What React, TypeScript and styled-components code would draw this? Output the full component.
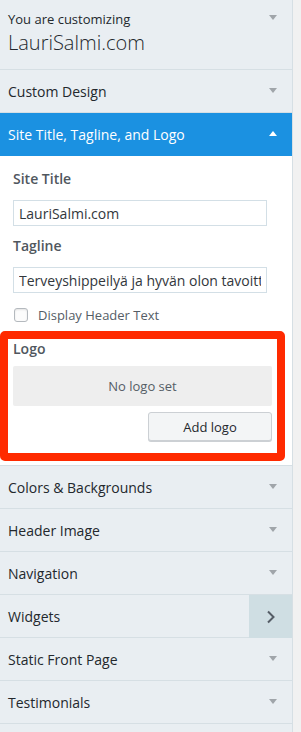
import React from 'react'
import styled, { createGlobalStyle } from 'styled-components'

const GlobalStyle = createGlobalStyle`
  html, body {
    margin: 0;
    padding: 0;
    background: #f1f1f1;
  }
  body {
    font-family: 'Open Sans', 'Liberation Sans', sans-serif;
    -webkit-font-smoothing: antialiased;
  }
`

const sections = [
  { title: 'Colors & Backgrounds' },
  { title: 'Header Image' },
  { title: 'Navigation' },
  { title: 'Widgets', panel: true },
  { title: 'Static Front Page' },
  { title: 'Testimonials' },
]

const App: React.FC = () => {
  return (
    <>
      <GlobalStyle />
      <StyledPage>
        <StyledSidebar>
          <StyledInfo>
            <StyledInfoLabel>You are customizing</StyledInfoLabel>
            <StyledSiteName>LauriSalmi.com</StyledSiteName>
            <StyledArrow />
          </StyledInfo>

          <StyledSectionTitle>
            Custom Design
            <StyledArrow />
          </StyledSectionTitle>

          <StyledSectionTitle $open>
            Site Title, Tagline, and Logo
            <StyledArrow $up />
          </StyledSectionTitle>

          <StyledContent>
            <StyledLabel>Site Title</StyledLabel>
            <StyledInput readOnly value="LauriSalmi.com" />
            <StyledLabel>Tagline</StyledLabel>
            <StyledInput readOnly value="Terveyshippeilyä ja hyvän olon tavoittelua" />
            <StyledCheckRow>
              <StyledCheckbox type="checkbox" readOnly />
              Display Header Text
            </StyledCheckRow>

            <StyledHighlight>
              <StyledLabel>Logo</StyledLabel>
              <StyledPlaceholder>No logo set</StyledPlaceholder>
              <StyledActions>
                <StyledButton type="button">Add logo</StyledButton>
              </StyledActions>
            </StyledHighlight>
          </StyledContent>

          {sections.map(({ title, panel }) => (
            <StyledSectionTitle key={title}>
              {title}
              {panel ? (
                <StyledPanelArrow>
                  <svg width="10" height="14" viewBox="0 0 10 14">
                    <path d="M2 1.5 L7.5 7 L2 12.5" fill="none" stroke="#555d66" strokeWidth="2" />
                  </svg>
                </StyledPanelArrow>
              ) : (
                <StyledArrow />
              )}
            </StyledSectionTitle>
          ))}
          <StyledSectionTitle />
        </StyledSidebar>
      </StyledPage>
    </>
  )
}

const StyledPage = styled.div`
  display: flex;
  min-height: 100vh;
  background: #f1f1f1;
`

const StyledSidebar = styled.div`
  width: 292px;
  flex-shrink: 0;
  background: #e9eef2;
  border-right: 1px solid #d6dfe4;
  display: flex;
  flex-direction: column;
`

const StyledInfo = styled.div`
  position: relative;
  height: 70px;
  box-sizing: border-box;
  padding: 9px 8px 0;
  border-bottom: 1px solid #d6dfe4;
`

const StyledInfoLabel = styled.div`
  font-size: 13px;
  line-height: 20px;
  color: #23282d;
`

const StyledSiteName = styled.div`
  font-size: 20px;
  font-weight: 300;
  line-height: 28px;
  color: #23282d;
`

const StyledArrow = styled.span<{ $up?: boolean }>`
  position: absolute;
  right: 15px;
  top: 50%;
  width: 0;
  height: 0;
  margin-top: -3px;
  border-left: 4px solid transparent;
  border-right: 4px solid transparent;
  ${(p) =>
    p.$up
      ? 'border-bottom: 5px solid #ffffff;'
      : 'border-top: 5px solid #a0a5aa;'}

  ${StyledInfo} & {
    top: 15px;
    margin-top: 0;
  }
`

const StyledSectionTitle = styled.div<{ $open?: boolean }>`
  position: relative;
  height: 42px;
  flex-shrink: 0;
  display: flex;
  align-items: center;
  padding: 0 8px;
  font-size: 14px;
  color: ${(p) => (p.$open ? '#ffffff' : '#23282d')};
  background: ${(p) => (p.$open ? '#1b91e1' : '#e9eef2')};
  border-bottom: 1px solid ${(p) => (p.$open ? '#1b91e1' : '#d6dfe4')};
`

const StyledPanelArrow = styled.span`
  position: absolute;
  right: 0;
  top: 0;
  bottom: -1px;
  width: 43px;
  background: #cfdee3;
  display: flex;
  align-items: center;
  justify-content: center;
`

const StyledContent = styled.div`
  background: #ffffff;
  padding: 13px 13px 4px;
  border-bottom: 1px solid #d6dfe4;
  display: flex;
  flex-direction: column;
`

const StyledLabel = styled.div`
  font-size: 14px;
  line-height: 20px;
  font-weight: 600;
  color: #50575e;
  margin-bottom: 11px;
`

const StyledInput = styled.input`
  box-sizing: border-box;
  width: 254px;
  height: 26px;
  padding: 0 5px;
  margin: 0 0 10px;
  border: 1px solid #d3dfe6;
  background: #ffffff;
  font-family: inherit;
  font-size: 14px;
  color: #32373c;
  outline: none;
`

const StyledCheckRow = styled.label`
  display: flex;
  align-items: center;
  gap: 10px;
  height: 20px;
  margin: 2px 0 6px;
  font-size: 13px;
  color: #555d66;
`

const StyledCheckbox = styled.input`
  appearance: none;
  box-sizing: border-box;
  width: 14px;
  height: 14px;
  margin: 0 0 0 1px;
  border: 1px solid #b4b9be;
  border-radius: 3px;
  background: #fcfcfc;
  box-shadow: inset 0 1px 2px rgba(0, 0, 0, 0.1);
`

const StyledHighlight = styled.div`
  box-sizing: border-box;
  width: 285px;
  margin-left: -13px;
  padding: 0 5px 12px;
  border: 8px solid #ff2a00;
  border-radius: 5px;
  display: flex;
  flex-direction: column;

  ${StyledLabel} {
    margin-bottom: 7px;
  }
`

const StyledPlaceholder = styled.div`
  height: 40px;
  border-radius: 2px;
  background: #eeeeee;
  display: flex;
  align-items: center;
  justify-content: center;
  font-size: 13px;
  color: #555d66;
`

const StyledActions = styled.div`
  display: flex;
  justify-content: flex-end;
  margin-top: 6px;
`

const StyledButton = styled.button`
  box-sizing: border-box;
  width: 124px;
  height: 29px;
  border: 1px solid #ccd0d4;
  border-radius: 3px;
  background: #f3f5f6;
  box-shadow: 0 1px 0 #ccd0d4;
  font-family: inherit;
  font-size: 13px;
  color: #23282d;
  cursor: pointer;
`

export default App
